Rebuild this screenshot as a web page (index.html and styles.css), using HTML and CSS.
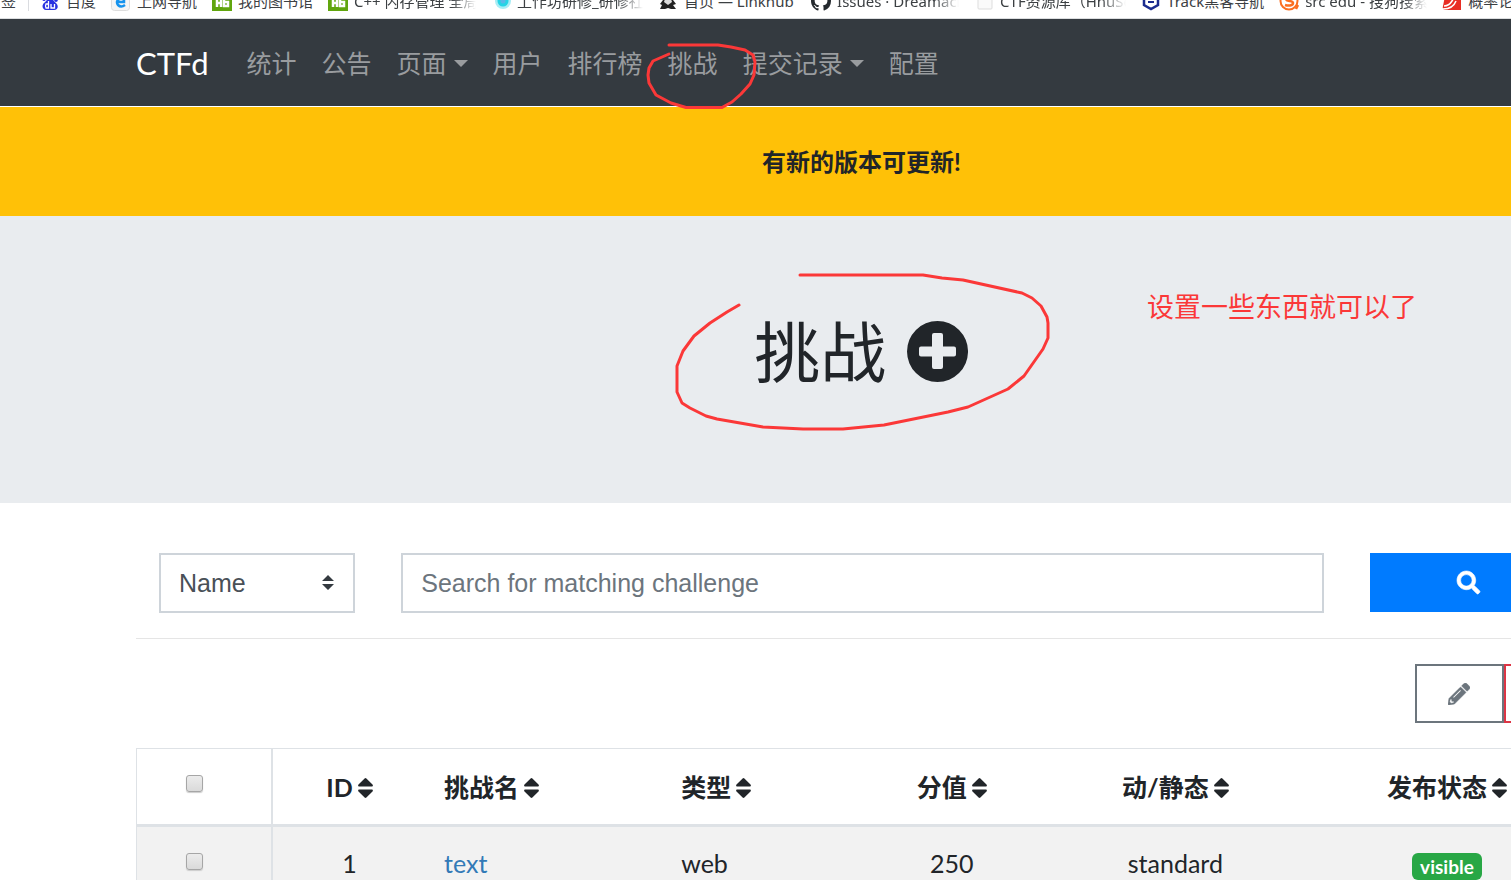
FILE: index.html
```html
<!DOCTYPE html>
<html lang="zh-CN">
<head>
<meta charset="utf-8">
<title>CTFd</title>
<link rel="stylesheet" href="styles.css">
</head>
<body>
<svg class="symbols" aria-hidden="true">
  <symbol id="sort" viewBox="0 0 15 20"><path d="M1.3 8.5C.2 8.5-.3 7.3.5 6.500L6.600.5Q7.500-.3 8.400.5L14.500 6.500C15.300 7.300 14.800 8.500 13.700 8.500ZM1.300 11.500H13.700C14.800 11.500 15.300 12.700 14.500 13.500L8.400 19.500Q7.500 20.300 6.600 19.500L.5 13.500C-.3 12.700.2 11.500 1.300 11.500Z"/></symbol>
  <symbol id="lib" viewBox="0 0 20 20"><path fill="#61a60e" d="M0 0h20v20H0z"/><path fill="none" stroke="#fff" stroke-width="2.500" d="M5 5v11M5 12h4M9 9v7M12 6v9h4v-4h-4"/></symbol>
</svg>
<div class="viewport">
<nav class="bookmarks" aria-label="书签栏">
  <a class="bm" href="#">签</a>
  <span class="bm-sep"></span>
  <a class="bm" href="#"><svg viewBox="0 0 20 20"><g fill="#2932e1"><ellipse cx="4" cy="7" rx="2" ry="3"/><ellipse cx="8" cy="3" rx="2" ry="3"/><ellipse cx="13" cy="3" rx="2" ry="3"/><ellipse cx="16" cy="8" rx="2" ry="3"/><path d="M10 7c-3 0-3 3-6 5-3 3-1 7 2 7h8c4 0 5-4 2-7-3-2-3-5-6-5Z"/></g><path fill="none" stroke="#fff" stroke-width="1.300" d="M8.500 10v7H6q-1-2 0-4h2.500M11 13v4h3.500v-4"/></svg><span>百度</span></a>
  <a class="bm" href="#"><svg viewBox="0 0 20 20"><rect x=".5" y=".5" width="18" height="19" rx="3" fill="#f5f5f5" stroke="#ddd"/><path d="M14 14q-4 3-7 0-2-3 0-5 3-3 6 0v2H6" fill="none" stroke="#1693ee" stroke-width="2.500"/></svg><span>上网导航</span></a>
  <a class="bm" href="#"><svg><use href="#lib"/></svg><span>我的图书馆</span></a>
  <a class="bm" href="#"><svg><use href="#lib"/></svg><span class="fade">C++ 内存管理 全局</span></a>
  <a class="bm" href="#"><svg viewBox="0 0 20 20"><circle cx="12" cy="10" r="8" fill="#a8edf5"/><circle cx="12" cy="10" r="4" fill="#5bb8e8" stroke="#25d4e5" stroke-width="3"/></svg><span class="fade wide">工作坊研修_研修社区</span></a>
  <a class="bm" href="#"><svg viewBox="0 0 20 20"><path fill="#222" d="M6 1h8l1 8 3 4-3 1 3 4h-5l-3-1-3 1H2l2-4-2-1 3-4Z"/><path fill="#ddd" d="M7 8h6l1 3-4 3-4-3Z"/></svg><span class="linkhub">首页 — Linkhub</span></a>
  <a class="bm" href="#"><svg viewBox="0 0 16 16"><path fill="#24292e" d="M8 0C3.580 0 0 3.580 0 8c0 3.540 2.290 6.530 5.470 7.590.4.070.55-.17.55-.38v-1.490c-2.010.37-2.530-.49-2.690-.94-.09-.23-.48-.94-.82-1.130-.28-.15-.68-.52-.01-.53.63-.01 1.080.58 1.230.82.72 1.210 1.870.87 2.330.66.07-.52.28-.87.51-1.070-1.780-.2-3.640-.89-3.640-3.950 0-.87.310-1.590.82-2.150-.08-.2-.36-1.020.08-2.120 0 0 .67-.21 2.200.82a7.400 7.400 0 0 1 4 0c1.530-1.040 2.200-.82 2.200-.82.44 1.100.16 1.920.08 2.120.51.56.82 1.270.82 2.150 0 3.070-1.870 3.750-3.650 3.950.29.25.54.73.54 1.480v2.200c0 .21.15.46.55.38A8 8 0 0 0 16 8c0-4.420-3.580-8-8-8Z"/></svg><span class="fade">Issues · Dreamacro</span></a>
  <a class="bm" href="#"><svg viewBox="0 0 20 20"><rect x="4" y="3" width="14" height="15" rx="1" fill="#fafafa" stroke="#ddd"/></svg><span class="fade wide">CTF资源库（HnuSec）</span></a>
  <a class="bm" href="#"><svg viewBox="0 0 20 20"><path d="m10 2 7 4v8l-7 4-7-4V6Z" fill="#fff" stroke="#1b2c8f" stroke-width="2.500"/><path d="M7 11h6" stroke="#1b2c8f" stroke-width="2"/></svg><span>Track黑客导航</span></a>
  <a class="bm" href="#"><svg viewBox="0 0 20 20"><circle cx="10" cy="10" r="8.500" fill="none" stroke="#fb6e20" stroke-width="2"/><path d="M14 6q-7-2-7 2c0 3 7 1 7 4s-5 3-8 2M17 18l2-4" fill="none" stroke="#fb6e20" stroke-width="2.500"/></svg><span class="fade">src edu - 搜狗搜索</span></a>
  <a class="bm" href="#"><svg viewBox="0 0 20 20"><path fill="#e82d24" d="M4 0h15v19H3q-3 0-2-4Z"/><path d="M2 15q5 0 8-5 4-7 9-7M1 18q10 0 13-8" fill="none" stroke="#fff" stroke-width="1.500"/></svg><span>概率论</span></a>
</nav>
<div class="page">
  <nav class="navbar">
    <a class="brand" href="#">CTFd</a>
    <div class="links">
      <a href="#">统计</a><a href="#">公告</a><a class="drop" href="#">页面</a><a href="#">用户</a><a href="#">排行榜</a><a href="#">挑战</a><a class="drop" href="#">提交记录</a><a href="#">配置</a>
    </div>
  </nav>
  <div class="notice">有新的版本可更新!</div>
  <header class="hero">
    <h1>挑战 <a href="#" aria-label="新建挑战"><svg viewBox="0 0 61 61"><path fill-rule="evenodd" d="M30.500 0a30.500 30.500 0 1 1 0 61 30.500 30.500 0 0 1 0-61ZM27 12q-2 0-2 2v11.500H14q-2 0-2 2v6q0 2 2 2h11V46q0 2 2 2h7q2 0 2-2V35.500h11q2 0 2-2v-6q0-2-2-2H36V14q0-2-2-2Z"/></svg></a></h1>
  </header>
  <main class="container">
    <form class="search">
      <div class="cell select">
        <select aria-label="搜索字段"><option>Name</option></select>
        <svg viewBox="0 0 12 16"><path d="M0 6 6 0l6 6ZM0 9h12l-6 6Z"/></svg>
      </div>
      <div class="cell"><input type="text" aria-label="搜索" placeholder="Search for matching challenge"></div>
      <div class="cell"><button type="button" class="go" aria-label="搜索"><svg viewBox="0 0 512 512"><path d="M505 442.700 405.300 343c-4.500-4.500-10.600-7-17-7H372c27.600-35.300 44-79.700 44-128C416 93.100 322.900 0 208 0S0 93.100 0 208s93.100 208 208 208c48.300 0 92.700-16.400 128-44v16.300c0 6.400 2.500 12.500 7 17l99.700 99.700c9.400 9.400 24.600 9.400 33.900 0l28.300-28.300c9.400-9.400 9.400-24.600.1-34zM208 336c-70.700 0-128-57.200-128-128 0-70.700 57.200-128 128-128 70.700 0 128 57.200 128 128 0 70.700-57.200 128-128 128z"/></svg></button></div>
    </form>
    <hr>
    <div class="actions">
      <button type="button" class="edit" aria-label="编辑"><svg viewBox="0 0 512 512"><path d="M497.900 142.100l-46.100 46.100c-4.700 4.700-12.300 4.700-17 0l-111-111c-4.700-4.700-4.700-12.300 0-17l46.100-46.100c18.700-18.700 49.100-18.700 67.900 0l60.100 60.100c18.800 18.700 18.800 49.100 0 67.900zM284.200 99.800L21.600 362.400.4 483.900c-2.900 16.400 11.400 30.600 27.800 27.800l121.500-21.300 262.600-262.600c4.700-4.700 4.700-12.300 0-17l-111-111c-4.800-4.700-12.400-4.700-17.100 0zM124.100 339.900c-5.500-5.500-5.500-14.300 0-19.800l154-154c5.500-5.500 14.300-5.500 19.800 0s5.500 14.300 0 19.800l-154 154c-5.500 5.500-14.300 5.500-19.800 0zM88 424h48v36.300l-64.500 11.300-31.100-31.100L51.700 376H88v48z"/></svg></button><button type="button" class="remove" aria-label="删除"></button>
    </div>
    <table>
      <colgroup><col class="c-check"><col class="c-id"><col class="c-name"><col class="c-type"><col class="c-value"><col class="c-mode"><col class="c-state"></colgroup>
      <thead><tr>
        <th class="check"><input type="checkbox" aria-label="全选"></th>
        <th>ID<svg><use href="#sort"/></svg></th>
        <th class="left">挑战名<svg><use href="#sort"/></svg></th>
        <th class="left">类型<svg><use href="#sort"/></svg></th>
        <th>分值<svg><use href="#sort"/></svg></th>
        <th>动/静态<svg><use href="#sort"/></svg></th>
        <th>发布状态<svg><use href="#sort"/></svg></th>
      </tr></thead>
      <tbody><tr>
        <td class="check"><input type="checkbox" aria-label="选择 text"></td>
        <td>1</td>
        <td class="left"><a href="#">text</a></td>
        <td class="left">web</td>
        <td>250</td>
        <td>standard</td>
        <td><span class="badge">visible</span></td>
      </tr></tbody>
    </table>
  </main>
</div>
<svg class="ink" width="1511" height="880" aria-hidden="true">
  <path d="M669 45H718L731 47 745 50 753 55 755 62 754 75 750 84 741 94 732 102 722 107.500H686L671 103 656 95 649 83 648 75 649 68 653 61 669 54"/>
  <path d="M800 275H923L942 278 963 280 1022 293 1032 298 1041 306 1047 317 1048 323V338L1043 349 1024 376 1008 389 968 407 948 412 884 425 843 429H803L763 427 717 419 706 416 690 408 682 403 677 392V366L683 351 694 336 710 323 727 312 739 305"/>
</svg>
<p class="note">设置一些东西就可以了</p>
</div>
</body>
</html>
```
FILE: styles.css
```css
* { box-sizing: border-box; }
html { overflow: hidden; }
body {
  margin: 0;
  background: #fff;
  color: #212529;
  font: 25px/37px Lato, "Noto Sans CJK SC", sans-serif;
}
a { color: inherit; text-decoration: none; }
.symbols { display: none; }
.viewport { position: relative; height: 100vh; overflow: hidden; }

/* Browser bookmarks strip */
.bookmarks {
  display: flex;
  align-items: flex-end;
  gap: 15px;
  height: 19px;
  padding: 0 0 7px 1px;
  overflow: hidden;
  border-bottom: 1px solid #dcdee0;
  color: #3c4043;
  font: 15px/20px "Noto Sans", "Noto Sans CJK SC", sans-serif;
  white-space: nowrap;
}
.bm { display: flex; align-items: center; gap: 6px; flex: none; height: 20px; }
.bm svg { width: 20px; height: 20px; }
.bm-sep { flex: none; width: 1px; height: 20px; margin: 0 -4px 0 -3px; background: #dadce0; }
.fade {
  width: 122px;
  overflow: hidden;
  mask-image: linear-gradient(to right, #000 80%, transparent);
}
.wide { width: 126px; }
.linkhub { width: 112px; }

/* The page is wider than the window and runs off its right edge */
.page { width: 114vw; }
.navbar {
  display: flex;
  align-items: center;
  height: 88px;
  padding: 1px 136px 0;
  background: #343a40;
  border-bottom: 1px solid #fff;
}
.brand { color: #fff; font-size: 31px; margin-right: 38px; }
.links { display: flex; gap: 25px; color: #999c9f; }
.drop { display: flex; align-items: center; gap: 7px; }
.drop::after {
  content: "";
  border: 7px solid transparent;
  border-top-color: currentColor;
  border-bottom: 0;
}
.notice {
  padding: 36px 0;
  background: #ffc107;
  font-size: 24px;
  font-weight: 700;
  text-align: center;
}
.hero { padding: 88px 0 104px; background: #e9ecef; text-align: center; }
h1 {
  display: flex;
  justify-content: center;
  align-items: center;
  gap: 21px;
  margin: 0;
  font-size: 66px;
  font-weight: 400;
  line-height: 95px;
}
h1 a { display: flex; }
h1 svg { width: 61px; height: 61px; fill: #212529; }

.container { padding: 50px 133px 0 136px; }
.search { display: grid; grid-template-columns: 1fr 4fr 1fr; }
.cell { position: relative; padding: 0 23px; }
select, input[type="text"] {
  display: block;
  width: 100%;
  height: 60px;
  padding: 0 18px;
  border: 2px solid #ced4da;
  border-radius: 0;
  background: #fff;
  color: #495057;
  font: 25px "Liberation Sans", sans-serif;
  appearance: none;
}
input::placeholder { color: #6c757d; opacity: 1; }
.select svg { position: absolute; right: 44px; top: 22px; width: 12px; height: 16px; fill: #343a40; pointer-events: none; }
button { display: flex; align-items: center; justify-content: center; height: 59px; padding: 0; background: #fff; }
.go { width: 100%; border: 0; background: #007bff; }
.go svg { width: 23px; height: 23px; overflow: visible; fill: #fff; stroke: #fff; stroke-width: 14; }
hr { height: 1px; margin: 25px 0; border: 0; background: #e5e5e5; }
.actions { display: flex; justify-content: flex-end; margin: 0 3px 25px 0; }
.edit { width: 89px; border: 2px solid #6c757d; }
.edit svg { width: 22px; height: 22px; fill: #6c757d; stroke: #6c757d; stroke-width: 10; }
.remove { width: 83px; border: 2px solid #dc3545; }

table { width: 100%; table-layout: fixed; border-collapse: separate; border-spacing: 0; border: 1px solid #dee2e6; }
.c-check { width: 136px; }
.c-id { width: 153px; }
.c-name { width: 237px; }
.c-type { width: 195px; }
.c-value { width: 187px; }
.c-mode { width: 260px; }
.c-state { width: 283px; }
th, td { padding: 18px; text-align: center; white-space: nowrap; }
th { padding-top: 20px; border-bottom: 3px solid #dee2e6; font-weight: 700; }
th svg { width: 15px; height: 20px; margin-left: 5px; vertical-align: -1px; fill: #212529; }
td { background: #f2f2f2; }
td a { color: #337ab7; }
.left { text-align: left; }
.check { border-right: 2px solid #dee2e6; vertical-align: top; padding: 26px 68px 0 49px; line-height: 0; text-align: left; }
input[type="checkbox"] {
  width: 17px;
  height: 17px;
  margin: 0;
  border: 1px solid #a6a6a6;
  border-radius: 3px;
  background: linear-gradient(#ececec, #dadada);
  box-shadow: 0 1px 1px #ccc;
  appearance: none;
}
.badge {
  display: inline-block;
  padding: 4px 8px;
  border-radius: 6px;
  background: #28a745;
  color: #fff;
  font-size: 19px;
  font-weight: 700;
  line-height: 19px;
  vertical-align: middle;
}

/* Hand-drawn marks over the page */
.ink { position: absolute; top: 0; left: 0; fill: none; stroke: #fb3838; stroke-width: 3; stroke-linecap: round; stroke-linejoin: round; pointer-events: none; }
.note { position: absolute; left: 1147px; top: 288px; margin: 0; color: #fb3838; font-size: 27px; }
```
